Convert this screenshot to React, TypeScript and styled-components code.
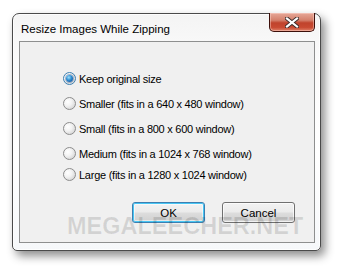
import React from 'react';
import styled, { createGlobalStyle } from 'styled-components';

const uiFont = `'Liberation Sans', Arial, sans-serif`;

const GlobalStyle = createGlobalStyle`
  html, body {
    margin: 0;
    padding: 0;
    background: #ffffff;
  }
  body {
    width: 341px;
    height: 272px;
    overflow: hidden;
    font-family: ${uiFont};
  }
`;

const Page = styled.div`
  position: relative;
  width: 341px;
  height: 272px;
  padding: 13px 0 0 12px;
  box-sizing: border-box;
`;

const Window = styled.div`
  position: relative;
  width: 309px;
  height: 238px;
  box-sizing: border-box;
  border: 1px solid #4a4a4a;
  border-radius: 7px 7px 5px 5px;
  background: linear-gradient(180deg, #f4f4f4 0%, #fbfbfb 20%, #ffffff 60%, #f6f8fa 100%);
  box-shadow: 4px 5px 10px rgba(0, 0, 0, 0.45), 0 0 0 1px rgba(255, 255, 255, 0.8) inset;
  display: flex;
  flex-direction: column;
  padding: 0 5px 7px 6px;
`;

const TitleBar = styled.div`
  height: 27px;
  display: flex;
  align-items: flex-start;
  justify-content: space-between;
`;

const Title = styled.div`
  font-size: 11.5px;
  color: #000;
  padding: 9px 0 0 2px;
`;

const CloseButton = styled.div`
  width: 46px;
  height: 19px;
  margin-top: -1px;
  box-sizing: border-box;
  border: 1px solid #3c0f0a;
  border-top: none;
  border-radius: 0 0 5px 5px;
  background: linear-gradient(180deg, #e6a898 0%, #d4806c 40%, #c0432c 55%, #c84a32 80%, #e0836a 100%);
  box-shadow: inset 0 0 0 1px rgba(255, 220, 210, 0.45);
  display: flex;
  align-items: center;
  justify-content: center;
`;

const Client = styled.div`
  flex: 1;
  border: 1px solid #8e8f8f;
  background: #f0f0f0;
  display: flex;
  flex-direction: column;
  padding: 29px 0 0 43px;
`;

const Options = styled.div`
  display: flex;
  flex-direction: column;
`;

const OptionRow = styled.label<{ $gap: number }>`
  display: flex;
  align-items: center;
  height: 15px;
  margin-bottom: ${({ $gap }) => $gap}px;
  font-size: 11px;
  letter-spacing: -0.25px;
  color: #000;
`;

const RadioCircle = styled.span<{ $checked?: boolean }>`
  width: 13px;
  height: 13px;
  box-sizing: border-box;
  border-radius: 50%;
  border: 1px solid ${({ $checked }) => ($checked ? '#3c7fb1' : '#8c8c8c')};
  background: radial-gradient(circle at 35% 35%, #ffffff 0%, #f2f2f2 40%, #c9c9c9 100%);
  margin-right: 3px;
  display: flex;
  align-items: center;
  justify-content: center;
`;

const RadioDot = styled.span`
  width: 7px;
  height: 7px;
  border-radius: 50%;
  background: radial-gradient(circle at 40% 35%, #9be0fb 0%, #2d8bd0 45%, #0b3f8a 100%);
  box-shadow: 0 0 0 1px rgba(30, 80, 140, 0.4);
`;

const Buttons = styled.div`
  display: flex;
  gap: 17px;
  margin-top: auto;
  margin-bottom: 19px;
  padding-left: 69px;
`;

const Button = styled.div<{ $default?: boolean }>`
  width: 73px;
  height: 21px;
  box-sizing: border-box;
  border-radius: 3px;
  border: 1px solid ${({ $default }) => ($default ? '#3c7fb1' : '#707070')};
  background: linear-gradient(180deg, #f2f2f2 0%, #ebebeb 48%, #dddddd 52%, #cfcfcf 100%);
  box-shadow: ${({ $default }) =>
    $default
      ? 'inset 0 0 0 1px #48c6f4, inset 0 0 0 2px rgba(255,255,255,0.5)'
      : 'inset 0 0 0 1px rgba(255,255,255,0.7)'};
  display: flex;
  align-items: center;
  justify-content: center;
  font-size: 11.5px;
  color: #000;
`;

const Watermark = styled.div`
  position: absolute;
  left: 67px;
  top: 213px;
  font-family: 'Liberation Sans', Arial, sans-serif;
  font-weight: bold;
  font-size: 23.5px;
  color: rgba(0, 0, 0, 0.12);
  pointer-events: none;
`;

const CloseGlyph = () => (
  <svg width="14" height="11" viewBox="0 0 14 11">
    <path d="M2 1.5 L12 9.5 M12 1.5 L2 9.5" stroke="#3a2a28" strokeWidth="4" strokeLinecap="square" fill="none" />
    <path d="M2 1.5 L12 9.5 M12 1.5 L2 9.5" stroke="#ffffff" strokeWidth="2.2" strokeLinecap="square" fill="none" />
  </svg>
);

const options = [
  { label: 'Keep original size', checked: true, gap: 10 },
  { label: 'Smaller (fits in a 640 x 480 window)', gap: 10 },
  { label: 'Small (fits in a 800 x 600 window)', gap: 10 },
  { label: 'Medium (fits in a 1024 x 768 window)', gap: 6 },
  { label: 'Large (fits in a 1280 x 1024 window)', gap: 0 },
];

export default function App() {
  return (
    <Page>
      <GlobalStyle />
      <Window>
        <TitleBar>
          <Title>Resize Images While Zipping</Title>
          <CloseButton>
            <CloseGlyph />
          </CloseButton>
        </TitleBar>
        <Client>
          <Options>
            {options.map((o) => (
              <OptionRow key={o.label} $gap={o.gap}>
                <RadioCircle $checked={o.checked}>{o.checked && <RadioDot />}</RadioCircle>
                {o.label}
              </OptionRow>
            ))}
          </Options>
          <Buttons>
            <Button $default>OK</Button>
            <Button>Cancel</Button>
          </Buttons>
        </Client>
      </Window>
      <Watermark>MEGALEECHER.NET</Watermark>
    </Page>
  );
}
